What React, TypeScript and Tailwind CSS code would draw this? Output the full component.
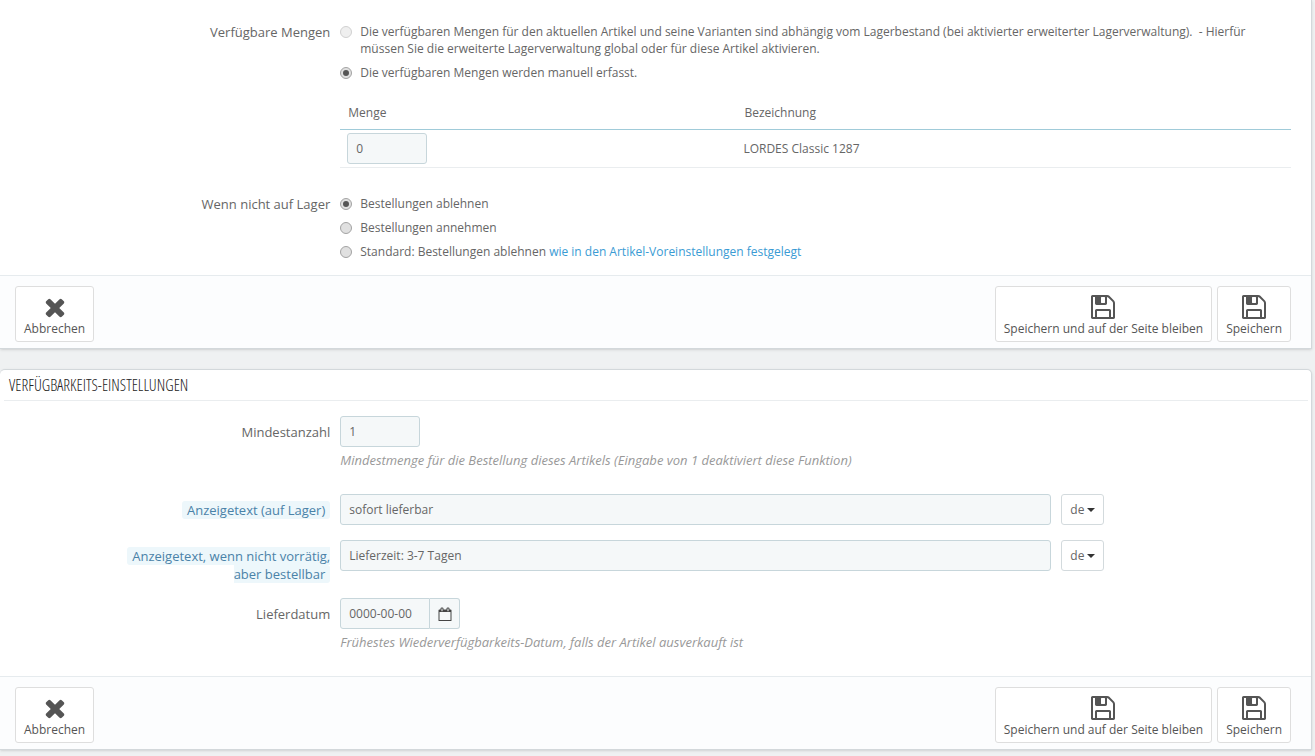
import type { ReactNode } from 'react';

const ICONS = {
  cancel: 'M1490 1322q0 40-28 68l-136 136q-28 28-68 28t-68-28l-294-294-294 294q-28 28-68 28t-68-28l-136-136q-28-28-28-68t28-68l294-294-294-294q-28-28-28-68t28-68l136-136q28-28 68-28t68 28l294 294 294-294q28-28 68-28t68 28l136 136q28 28 28 68t-28 68l-294 294 294 294q28 28 28 68z',
  save: 'M512 1536h768v-384h-768v384zm896 0h128v-896q0-14-10-38.5t-20-34.5l-281-281q-10-10-34-20t-39-10v416q0 40-28 68t-68 28h-576q-40 0-68-28t-28-68v-416h-128v1280h128v-416q0-40 28-68t68-28h832q40 0 68 28t28 68v416zm-384-928v-320q0-13-9.5-22.5t-22.5-9.5h-192q-13 0-22.5 9.5t-9.5 22.5v320q0 13 9.5 22.5t22.5 9.5h192q13 0 22.5-9.5t9.5-22.5zm640 32v928q0 40-28 68t-68 28h-1344q-40 0-68-28t-28-68v-1344q0-40 28-68t68-28h928q40 0 88 20t76 48l280 280q28 28 48 76t20 88z',
  calendar: 'M192 1664h1408v-1024h-1408v1024zm384-1152v-288q0-14-9-23t-23-9h-64q-14 0-23 9t-9 23v288q0 14 9 23t23 9h64q14 0 23-9t9-23zm768 0v-288q0-14-9-23t-23-9h-64q-14 0-23 9t-9 23v288q0 14 9 23t23 9h64q14 0 23-9t9-23zm384-64v1280q0 52-38 90t-90 38h-1408q-52 0-90-38t-38-90v-1280q0-52 38-90t90-38h128v-96q0-66 47-113t113-47h64q66 0 113 47t47 113v96h384v-96q0-66 47-113t113-47h64q66 0 113 47t47 113v96h128q52 0 90 38t38 90z',
};

const INPUT =
  'h-[31px] rounded-[3px] border border-[#c7d6db] bg-[#f5f8f9] px-2 text-xs text-[#666] outline-none';

function Icon({ name, className }: { name: keyof typeof ICONS; className: string }) {
  return (
    <svg viewBox="0 0 1792 1792" fill="currentColor" className={className} aria-hidden>
      <path d={ICONS[name]} />
    </svg>
  );
}

function Row({ label, className = '', children }: { label: ReactNode; className?: string; children: ReactNode }) {
  return (
    <div className={`flex ${className}`}>
      <div className="flex w-1/4 shrink-0 justify-end pr-[5px] text-right text-[13px] leading-[18px]">{label}</div>
      <div className="min-w-0 flex-1 px-[5px]">{children}</div>
    </div>
  );
}

function Radio({ name, checked, disabled, children }: {
  name: string;
  checked?: boolean;
  disabled?: boolean;
  children: ReactNode;
}) {
  return (
    <label className="flex items-start gap-2 leading-[17px]">
      <input
        type="radio"
        name={name}
        defaultChecked={checked}
        disabled={disabled}
        className="mt-[3px] flex h-3 w-3 shrink-0 appearance-none items-center justify-center rounded-full border border-[#a3a3a3] bg-[#e0e0e0] checked:before:h-[6px] checked:before:w-[6px] checked:before:rounded-full checked:before:bg-[#555] checked:before:content-[''] disabled:opacity-50"
      />
      <span>{children}</span>
    </label>
  );
}

function FooterButton({ icon, children }: { icon: 'cancel' | 'save'; children: ReactNode }) {
  return (
    <button
      type="button"
      className="flex h-14 flex-col items-center rounded-[3px] border border-[#dedede] bg-white px-2 pt-[6px] text-[#555]"
    >
      <Icon name={icon} className="h-7 w-7" />
      <span className="leading-4">{children}</span>
    </button>
  );
}

function PanelFooter() {
  return (
    <div className="flex justify-between border-t border-[#e6ebee] bg-[#fcfdfe] pt-[10px] pr-5 pb-[6px] pl-[15px]">
      <FooterButton icon="cancel">Abbrechen</FooterButton>
      <div className="flex gap-[5px]">
        <FooterButton icon="save">Speichern und auf der Seite bleiben</FooterButton>
        <FooterButton icon="save">Speichern</FooterButton>
      </div>
    </div>
  );
}

function LanguageField({ id, value }: { id: string; value: string }) {
  return (
    <div className="flex gap-[10px]">
      <input id={id} type="text" defaultValue={value} className={`w-[calc(75%-2px)] ${INPUT}`} />
      <button
        type="button"
        className="flex h-[31px] items-center gap-[3px] rounded-[3px] border border-[#d3dadd] bg-white px-2"
      >
        de
        <svg viewBox="0 0 8 4" className="h-1 w-2" fill="#333" aria-hidden>
          <path d="M0 0h8L4 4z" />
        </svg>
      </button>
    </div>
  );
}

function HintLabel({ id, children }: { id: string; children: ReactNode }) {
  return (
    <label htmlFor={id} className="mt-[7px] block max-w-[210px]">
      <span className="rounded-[3px] bg-[#edf7fb] px-[5px] text-[#4a82a8]">{children}</span>
    </label>
  );
}

export default function App() {
  return (
    <div className="min-h-screen bg-[#eff1f2] pr-[3px] font-['Open_Sans',sans-serif] text-xs text-[#666]">
      <section className="border-r border-b border-[#d3d8db] bg-white shadow-sm">
        <div className="px-[15px] pt-[23px] pb-[15px]">
          <Row label="Verfügbare Mengen">
            <div className="flex flex-col gap-[7px]">
              <Radio name="quantities" disabled>
                Die verfügbaren Mengen für den aktuellen Artikel und seine Varianten sind abhängig vom Lagerbestand
                (bei aktivierter erweiterter Lagerverwaltung). &nbsp;- Hierfür müssen Sie die erweiterte
                Lagerverwaltung global oder für diese Artikel aktivieren.
              </Radio>
              <Radio name="quantities" checked>
                Die verfügbaren Mengen werden manuell erfasst.
              </Radio>
            </div>
          </Row>

          <Row label="" className="mt-4">
            <table className="w-full table-fixed border-separate border-spacing-0 text-left">
              <thead>
                <tr className="h-[33px]">
                  <th className="w-5/12 border-b border-[#a0cbd9] px-2 font-normal">Menge</th>
                  <th className="border-b border-[#a0cbd9] px-2 font-normal">Bezeichnung</th>
                </tr>
              </thead>
              <tbody>
                <tr>
                  <td className="border-b border-[#eaedef] px-[7px] py-[3px]">
                    <input type="text" aria-label="Menge" defaultValue="0" className={`block w-20 ${INPUT}`} />
                  </td>
                  <td className="border-b border-[#eaedef] px-[7px]">LORDES Classic 1287</td>
                </tr>
              </tbody>
            </table>
          </Row>

          <Row label="Wenn nicht auf Lager" className="mt-[27px]">
            <div className="flex flex-col gap-[7px]">
              <Radio name="out-of-stock" checked>Bestellungen ablehnen</Radio>
              <Radio name="out-of-stock">Bestellungen annehmen</Radio>
              <Radio name="out-of-stock">
                Standard: Bestellungen ablehnen{' '}
                <a href="#preferences" className="text-[#3a9bd4]">
                  wie in den Artikel-Voreinstellungen festgelegt
                </a>
              </Radio>
            </div>
          </Row>
        </div>
        <PanelFooter />
      </section>

      <section className="mt-5 overflow-hidden rounded-t-[5px] border-t border-r border-b border-[#d3d8db] bg-white shadow-sm">
        <h3 className="mr-[3px] ml-1 border-b border-[#eaedef] px-[5px] font-['Ubuntu_Condensed','Open_Sans_Condensed_Light','Open_Sans_Condensed',sans-serif] text-base leading-[30px] font-light text-[#222]">
          VERFÜGBARKEITS-EINSTELLUNGEN
        </h3>
        <div className="px-[15px] pt-[15px] pb-6">
          <Row label={<label htmlFor="minimum" className="mt-[7px]">Mindestanzahl</label>}>
            <input id="minimum" type="text" defaultValue="1" className={`block w-20 ${INPUT}`} />
            <p className="mt-1 mb-px text-[13px] leading-[18px] text-[#999] italic">
              Mindestmenge für die Bestellung dieses Artikels (Eingabe von 1 deaktiviert diese Funktion)
            </p>
          </Row>
          <Row className="mt-6" label={<HintLabel id="text-available">Anzeigetext (auf Lager)</HintLabel>}>
            <LanguageField id="text-available" value="sofort lieferbar" />
          </Row>
          <Row
            className="mt-[15px]"
            label={<HintLabel id="text-later">Anzeigetext, wenn nicht vorrätig, aber bestellbar</HintLabel>}
          >
            <LanguageField id="text-later" value="Lieferzeit: 3-7 Tagen" />
          </Row>
          <Row className="mt-[15px]" label={<label htmlFor="date" className="mt-[7px]">Lieferdatum</label>}>
            <div className="flex">
              <input id="date" type="text" defaultValue="0000-00-00" className={`w-[90px] rounded-r-none ${INPUT}`} />
              <button
                type="button"
                aria-label="Lieferdatum"
                className="flex h-[31px] w-[30px] items-center justify-center rounded-r-[3px] border border-l-0 border-[#c7d6db] bg-[#f5f8f9] text-[#444]"
              >
                <Icon name="calendar" className="h-[14px] w-[14px]" />
              </button>
            </div>
            <p className="mt-1 mb-px text-[13px] leading-[18px] text-[#999] italic">
              Frühestes Wiederverfügbarkeits-Datum, falls der Artikel ausverkauft ist
            </p>
          </Row>
        </div>
        <PanelFooter />
      </section>
    </div>
  );
}
